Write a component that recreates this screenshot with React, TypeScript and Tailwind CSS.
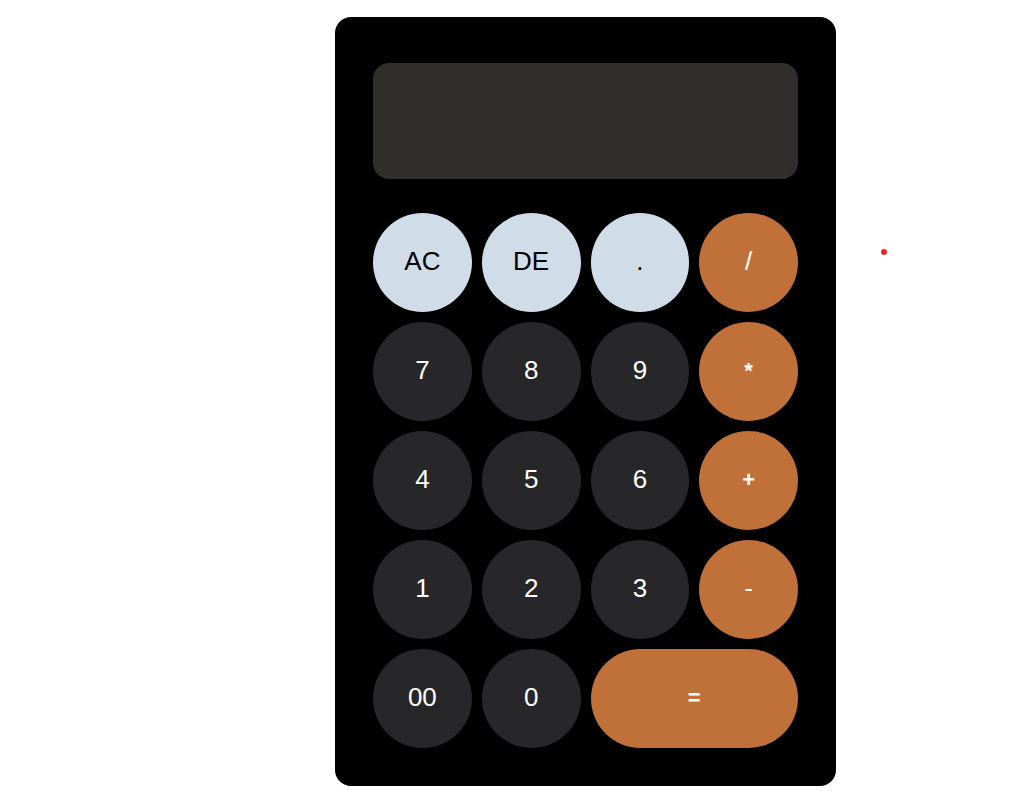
import React from "react";

const dark = "bg-[#272729] text-white";
const light = "bg-[#d0dce8] text-black";
const orange = "bg-[#c07039] text-white";

const keys: { label: string; cls: string; wide?: boolean; bold?: boolean }[] = [
  { label: "AC", cls: light },
  { label: "DE", cls: light },
  { label: ".", cls: light },
  { label: "/", cls: orange },
  { label: "7", cls: dark },
  { label: "8", cls: dark },
  { label: "9", cls: dark },
  { label: "*", cls: orange, bold: true },
  { label: "4", cls: dark },
  { label: "5", cls: dark },
  { label: "6", cls: dark },
  { label: "+", cls: orange, bold: true },
  { label: "1", cls: dark },
  { label: "2", cls: dark },
  { label: "3", cls: dark },
  { label: "-", cls: orange },
  { label: "00", cls: dark },
  { label: "0", cls: dark },
  { label: "=", cls: orange, wide: true, bold: true },
];

export default function App() {
  return (
    <div className="min-h-[795px] bg-white flex items-start pt-[17px] pl-[335px]" style={{ fontFamily: '"Liberation Sans", Arial, sans-serif' }}>
      <div className="w-[501px] h-[769px] bg-black rounded-[16px] px-[38px] pt-[46px] flex flex-col">
        <div className="h-[116px] w-full bg-[#302e2b] rounded-[16px]" />
        <div className="mt-[34px] grid grid-cols-4 gap-x-[10px] gap-y-[10px]">
          {keys.map((k) => (
            <button
              key={k.label}
              className={`${k.cls} ${k.wide ? "col-span-2" : ""} ${k.bold ? "font-bold text-[22px]" : "text-[26px]"} h-[99px] rounded-full flex items-center justify-center border-0 pb-[2px]`}
            >
              {k.label}
            </button>
          ))}
        </div>
      </div>
      <div className="ml-[45px] mt-[232px] w-[6px] h-[6px] rounded-full bg-[#e02828]" />
    </div>
  );
}
